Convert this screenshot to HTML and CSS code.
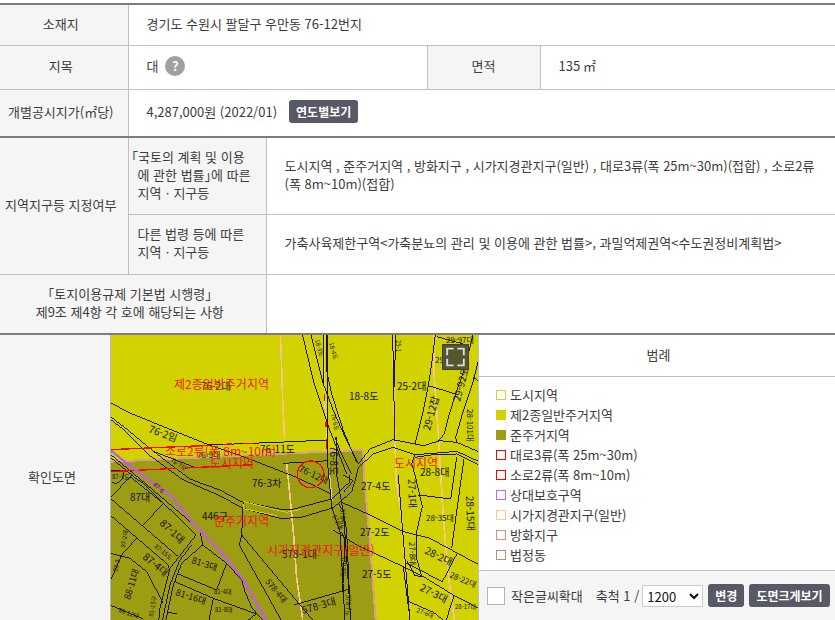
FILE: index.html
```html
<!DOCTYPE html>
<html lang="ko">
<head>
<meta charset="utf-8">
<meta name="viewport" content="width=device-width, initial-scale=1">
<title>토지이용계획</title>
<link rel="stylesheet" href="styles.css">
</head>
<body>
<main>
<table class="info">
  <colgroup><col class="c-label"><col class="c-sub"><col class="c-value"><col class="c-area"><col></colgroup>
  <tbody>
    <tr class="row-address"><th scope="row">소재지</th><td colspan="4">경기도 수원시 팔달구 우만동 76-12번지</td></tr>
    <tr class="row-category">
      <th scope="row">지목</th>
      <td colspan="2"><div class="inline">대 <button class="help" type="button" aria-label="지목 도움말">?</button></div></td>
      <th scope="row">면적</th><td>135 ㎡</td>
    </tr>
    <tr class="row-price">
      <th scope="row">개별공시지가(㎡당)</th>
      <td colspan="4"><div class="price">4,287,000원 (2022/01) <button class="btn" type="button">연도별보기</button></div></td>
    </tr>
  </tbody>
  <tbody>
    <tr class="row-plan">
      <th scope="rowgroup" rowspan="2">지역지구등 지정여부</th>
      <th class="law" scope="row"><span class="hang">「국토의 계획 및 이용<br>에 관한 법률」에 따른<br>지역ㆍ지구등</span></th>
      <td colspan="3">도시지역 , 준주거지역 , 방화지구 , 시가지경관지구(일반) , 대로3류(폭 25m~30m)(접합) , 소로2류(폭 8m~10m)(접합)</td>
    </tr>
    <tr class="row-other">
      <th class="law" scope="row">다른 법령 등에 따른<br>지역ㆍ지구등</th>
      <td colspan="3">가축사육제한구역&lt;가축분뇨의 관리 및 이용에 관한 법률&gt;, 과밀억제권역&lt;수도권정비계획법&gt;</td>
    </tr>
    <tr class="row-other">
      <th scope="row" colspan="2">「토지이용규제 기본법 시행령」<br>제9조 제4항 각 호에 해당되는 사항</th>
      <td colspan="3"></td>
    </tr>
  </tbody>
</table>

<section class="drawing">
  <h2 class="drawing-title">확인도면</h2>
  <div class="map">
    <svg class="map-art" viewBox="1 1 367 285" preserveAspectRatio="xMidYMid slice" role="img" aria-label="확인도면">
      <g class="lines" transform="scale(.333333)">
        <rect class="general" width="1110" height="870"/>
        <path class="semi" d="M0 383 540 358 760 348 762 423 778 603 798 870H0z"/>
        <path class="fire" d="M0 383 540 358 760 348 762 423 778 603 798 870"/>
        <g class="scenic">
          <path d="M511 0 515 100 518 200 524 320M530 390 535 435 550 593 560 733 580 870"/>
          <path d="M641 0 644 190 652 320M658 423 666 500M848 0 852 200 855 320 858 435 875 553 885 683 900 870"/>
          <path d="M970 0 973 130 985 300 993 435 1000 553 1015 723 1035 870"/>
        </g>
        <g class="parcel">
          <path d="M0 205 55 235 170 282 290 330 400 368 560 430 660 478"/>
          <path d="M0 247 50 285 130 352 240 435 265 445 330 468 390 501 520 528 540 528 665 495 720 443 718 423"/>
          <path d="M0 255 45 290 120 365 215 435 255 453 325 483 400 523 510 553 570 551 670 521 725 473 740 423 745 400 790 360 850 340 915 362 970 358 1040 352 1110 384"/>
          <path d="M300 333 570 322 648 318M520 388 655 380M130 352 260 402M0 360 90 435 270 588 278 633 215 688 190 753 165 870"/>
          <path d="M0 369 80 435 100 448 258 603 235 633 180 703 150 823 145 870M245 633 210 678 180 753 155 870"/>
          <path d="M0 410H40V425Q32 455 5 446M66 423 0 492 205 668M60 428 160 508 100 573M0 543 175 693V703"/>
          <path d="M278 633 350 688 320 768 200 718M195 743 310 793 295 870M310 793 440 840 470 870M0 658 60 673 110 713 160 808M80 613 35 663 0 743M350 688 395 738 405 773 425 820 440 838 400 870"/>
          <path d="M400 501 395 603 388 633 520 870M395 603 570 813 610 860M0 813 100 855M170 833 200 840"/>
          <path d="M577 0 610 140 660 290 710 420M602 0 640 150 670 230 710 320 745 390M640 0 640 150M650 0 648 100 665 180 700 290 740 385M675 310 690 350 725 420M652 0V380L665 520 690 593 695 683 700 768 705 870M680 310V423L710 590 722 870M685 508 700 533 710 673 722 858M695 593 705 620 698 770"/>
          <path d="M848 0 852 200 855 320M858 0 852 160M976 0 965 90 955 155 940 230 915 330M955 155 1037 180M980 8 1060 30M1090 0 1065 100 1037 180 1015 250 1003 300 985 320M1110 60 1090 140 1060 230 1037 310 1040 325M1090 130 1110 145"/>
          <path d="M745 390 780 345 850 317 940 335 990 320 1040 325 1110 355M915 362 905 390 915 423 937 518 920 593 920 673 935 728M1040 370 1022 495 925 483M1062 375 1055 423 1025 643M915 370 970 362 1040 360 1110 395"/>
          <path d="M695 505 780 543 880 593 960 613 1110 694M670 588 740 633 880 698 940 728 1030 783 1110 825M1040 661 997 743 885 685M1032 785 1005 870M865 423 875 553 900 860M890 800 970 835 1000 858M552 813 715 766M700 423 730 440 700 475"/>
          <path d="M892 682 915 725 940 728M880 698 898 840"/>
        </g>
        <path class="canal" d="M400 503 530 535 570 527M400 510 400 524 500 545"/>
        <path class="minor" d="M0 347 300 334M340 331 365 330M400 329 430 328M0 413 200 403M225 402 430 392M643 180V200M648 265V280M650 315V345"/>
        <path class="guard" d="M0 348 95 423 180 483 250 568 345 668 400 738 475 870"/>
        <circle class="minor" cx="602" cy="421" r="40"/>
      </g>
      <g class="lot">
        <text x="91" y="56">76-2대</text>
        <text x="87" y="124" class="small">76-9대</text>
        <text x="150" y="119">76-11도</text>
        <text x="239" y="66">18-8도</text>
        <text x="287" y="56">25-2대</text>
        <text x="310" y="142">28-8대</text>
        <text x="20" y="167">87대</text>
        <text x="92" y="186">446구</text>
        <text x="142" y="153">76-3차</text>
        <text x="172" y="224">578-1대</text>
        <text x="251" y="156">27-4도</text>
        <text x="250" y="202">27-2도</text>
        <text x="252" y="244">27-5도</text>
        <text x="316" y="187" class="small">28-35대</text>
        <text x="336" y="9" class="small">29-97대</text>
        <text transform="translate(38 98) rotate(20)">76-2임</text>
        <text transform="translate(49 190) rotate(43)">87-1대</text>
        <text transform="translate(32 224) rotate(40)">87-4대</text>
        <text transform="translate(20 266) rotate(-73)" class="mid">88-11대</text>
        <text transform="translate(81 229) rotate(18)" class="mid">81-3대</text>
        <text transform="translate(65 261) rotate(18)" class="mid">81-16대</text>
        <text transform="translate(193 280) rotate(-16)">578-3대</text>
        <text transform="translate(155 248) rotate(50)" class="small">578-4대</text>
        <text transform="translate(188 137) rotate(25)" class="mid">76-12대</text>
        <text transform="translate(220 112) rotate(90)">76-8도</text>
        <text transform="translate(221 80) rotate(78)" class="tiny">76-6도</text>
        <text transform="translate(219 9) rotate(75)" class="tiny">18-4도</text>
        <text transform="translate(205 6) rotate(75)" class="tiny">18-3도</text>
        <text transform="translate(286 6) rotate(90)" class="tiny">25-1</text>
        <text transform="translate(320 97) rotate(-75)">29-12잡</text>
        <text transform="translate(350 68) rotate(-75)">29-92도</text>
        <text transform="translate(357 75) rotate(90)" class="small">28-101대</text>
        <text transform="translate(298 145) rotate(88)">27-1대</text>
        <text transform="translate(356 162) rotate(88)">28-15대</text>
        <text transform="translate(299 208) rotate(88)" class="small">27-8대</text>
        <text transform="translate(314 219) rotate(26)">28-2대</text>
        <text transform="translate(309 256) rotate(27)">27-3대</text>
        <text transform="translate(339 243) rotate(23)" class="small">28-22대</text>
        <text transform="translate(345 275)" class="tiny">28-17대</text>
        <text transform="translate(306 278) rotate(20)" class="tiny">27-6대</text>
        <text transform="translate(230 175) rotate(90)" class="tiny">578-6도</text>
        <text transform="translate(231 222) rotate(90)" class="tiny">578-8도</text>
        <text transform="translate(236 261) rotate(90)" class="tiny">578-7도</text>
        <text transform="translate(222 182) rotate(65)" class="tiny">578-5</text>
        <text transform="translate(44 213) rotate(40)" class="tiny">87-15도</text>
        <text transform="translate(15 214) rotate(-80)" class="tiny">87-2대</text>
        <text transform="translate(60 127) rotate(35)" class="tiny">76-7도</text>
        <text transform="translate(43 151) rotate(45)" class="tiny">87-6</text>
        <text transform="translate(43 283) rotate(-80)" class="tiny">81-15구</text>
        <text transform="translate(8 278) rotate(18)" class="tiny">88-12대</text>
        <text x="104" y="260" class="tiny">81-4대</text>
        <text x="105" y="278" class="tiny">81-8대</text>
        <text x="2" y="145" class="tiny">87-3도</text>
        <text transform="translate(7 238) rotate(-75)" class="tiny">88-3</text>
        <text x="325" y="29" class="small">29-9대</text>
      </g>
      <g class="zone">
        <text x="64" y="55">제2종일반주거지역</text>
        <text x="55" y="122">소로2류(폭 8m~10m)</text>
        <text x="100" y="134">도시지역</text>
        <text x="284" y="134">도시지역</text>
        <text x="104" y="192">준주거지역</text>
        <text x="157" y="221">시가지경관지구(일반)</text>
      </g>
    </svg>
    <button class="expand" type="button" aria-label="도면 전체화면">
      <svg viewBox="0 0 26 26" aria-hidden="true"><path d="M4 11V4h7M15 4h7v7M22 15v7h-7M11 22H4v-7"/></svg>
    </button>
  </div>
  <div class="legend">
    <h3>범례</h3>
    <ul>
      <li><i class="chip city"></i>도시지역</li>
      <li><i class="chip housing"></i>제2종일반주거지역</li>
      <li><i class="chip mixed"></i>준주거지역</li>
      <li><i class="chip road"></i>대로3류(폭 25m~30m)</li>
      <li><i class="chip road"></i>소로2류(폭 8m~10m)</li>
      <li><i class="chip protect"></i>상대보호구역</li>
      <li><i class="chip view"></i>시가지경관지구(일반)</li>
      <li><i class="chip fireproof"></i>방화지구</li>
      <li><i class="chip district"></i>법정동</li>
    </ul>
    <form class="controls">
      <input type="checkbox" id="enlarge"><label for="enlarge">작은글씨확대</label>
      <label class="scale" for="scale">축척 1 /</label>
      <select id="scale"><option>600</option><option selected>1200</option><option>2400</option></select>
      <button class="btn" type="button">변경</button>
      <button class="btn" type="button">도면크게보기</button>
    </form>
  </div>
</section>
</main>
</body>
</html>
```
FILE: styles.css
```css
* { box-sizing: border-box; }

body {
  margin: 0;
  padding-top: 3px;
  background: #fff;
  color: #3c3c3c;
  font: 13px/18px "Noto Sans CJK KR", "Noto Sans", sans-serif;
}

button, select, input { font: inherit; margin: 0; }

.info {
  width: 100%;
  table-layout: fixed;
  border-collapse: collapse;
}

.info tbody, .info { border-top: 2px solid #7c7c7e; border-bottom: 2px solid #7c7c7e; }
.c-label { width: 128px; }
.c-sub { width: 138px; }
.c-value { width: 161px; }
.c-area { width: 113px; }

.info th, .info td {
  padding: 0 12px 2px 18px;
  border: 1px solid #c0c0c0;
  border-width: 1px 0 0 1px;
  text-align: left;
  font-weight: 400;
}

.info tr > :first-child { border-left: 0; }
.info .row-other > .law { border-left: 1px solid #c0c0c0; }
.info tbody tr:first-child > * { border-top: 0; }
.info th {
  padding: 0 0 2px;
  background: #f5f5f5;
  text-align: center;
  font-feature-settings: "halt";
}
.info th:first-child:not(.law) { padding-right: 6px; }
.info .law { padding-left: 9px; text-align: left; }
.hang { display: block; text-indent: -6px; white-space: nowrap; }
.row-address { height: 41px; }
.row-category { height: 44px; }
.row-price { height: 48px; }
.row-plan { height: 77px; }
.row-other { height: 60px; }

.inline, .price { display: flex; align-items: center; }
.inline { gap: 7px; }
.price { gap: 12px; }

.help {
  width: 20px;
  height: 20px;
  padding: 0;
  border: 0;
  border-radius: 50%;
  background: #a0a0a0;
  color: #fff;
  font-weight: 700;
  line-height: 20px;
}

.btn {
  height: 23px;
  padding: 0 7px;
  border: 0;
  border-radius: 3px;
  background: #595966;
  color: #fff;
  font-size: 12px;
  font-weight: 700;
  line-height: 22px;
  white-space: nowrap;
}

.drawing {
  display: grid;
  grid-template-columns: 110px minmax(0, 368fr) minmax(0, 357fr);
}

.drawing-title {
  display: grid;
  place-items: center;
  margin: 0;
  padding: 0 6px 2px 0;
  background: #f5f5f5;
  font-size: 13px;
  font-weight: 400;
}

.map { position: relative; min-width: 0; border-left: 1px solid #b4b4b4; background: #d2d200; }
.map-art { display: block; width: 100%; height: 100%; overflow: hidden; }

.expand {
  position: absolute;
  top: 9px;
  right: 9px;
  width: 27px;
  height: 26px;
  padding: 0;
  border: 1px solid #41412a;
  background: #55552e;
}

.expand svg { display: block; width: 100%; height: 100%; fill: none; stroke: #ddd; stroke-width: 2; }

.lines { shape-rendering: crispEdges; }
.lines path, .lines circle { fill: none; stroke-width: 3; }
.lines .general { fill: #d2d200; }
.lines .semi { fill: #9d9d14; }
.lines .fire { stroke: #dc9d91; stroke-width: 6; }
.lines .scenic path { stroke: #f5c78d; stroke-width: 5; }
.lines .parcel path { stroke: #17170a; }
.lines .canal { stroke: #d2d200; }
.lines .minor { stroke: #f00; stroke-width: 4; }
.lines .guard { stroke: #c45ae8; stroke-width: 7; }
.lot { font-size: 10px; fill: #111; }
.lot .mid { font-size: 9px; }
.lot .small { font-size: 8px; }
.lot .tiny { font-size: 6px; }
.zone { font-size: 12px; fill: #f01b0c; }

.legend { display: flex; flex-direction: column; border-left: 1px solid #c0c0c0; }

.legend h3 {
  margin: 0;
  height: 42px;
  padding-left: 3px;
  border-bottom: 1px solid #c0c0c0;
  font-size: 13px;
  font-weight: 400;
  line-height: 39px;
  text-align: center;
}

.legend ul { flex: 1; margin: 0; padding: 8px 17px 5px; list-style: none; line-height: 20px; }
.legend li { display: flex; align-items: center; gap: 4px; }
.chip { width: 10px; height: 10px; border: 1px solid; }
.city { color: #d2d23c; }
.housing { color: #d2d200; background: #d2d200; }
.mixed { color: #9d9d14; background: #9d9d14; }
.road { color: #f00; }
.protect { color: #c864ff; }
.view { color: #ffc896; }
.fireproof { color: #dc8c8c; }
.district { color: #a59678; }

.controls {
  display: flex;
  align-items: center;
  height: 50px;
  padding-left: 8px;
  border-top: 1px solid #c0c0c0;
  background: #f5f5f5;
  white-space: nowrap;
}

.controls input {
  width: 18px;
  height: 18px;
  margin-right: 6px;
  appearance: none;
  border: 1px solid #b4b4b4;
  background: #fff;
}

.controls .scale { margin-left: 13px; }

.controls select {
  width: 61px;
  height: 22px;
  margin: 0 5px 0 3px;
  padding: 0;
  border: 1px solid #ccc;
  background: #fff;
  color: #111;
}

.controls .btn + .btn { margin-left: 5px; }
```
